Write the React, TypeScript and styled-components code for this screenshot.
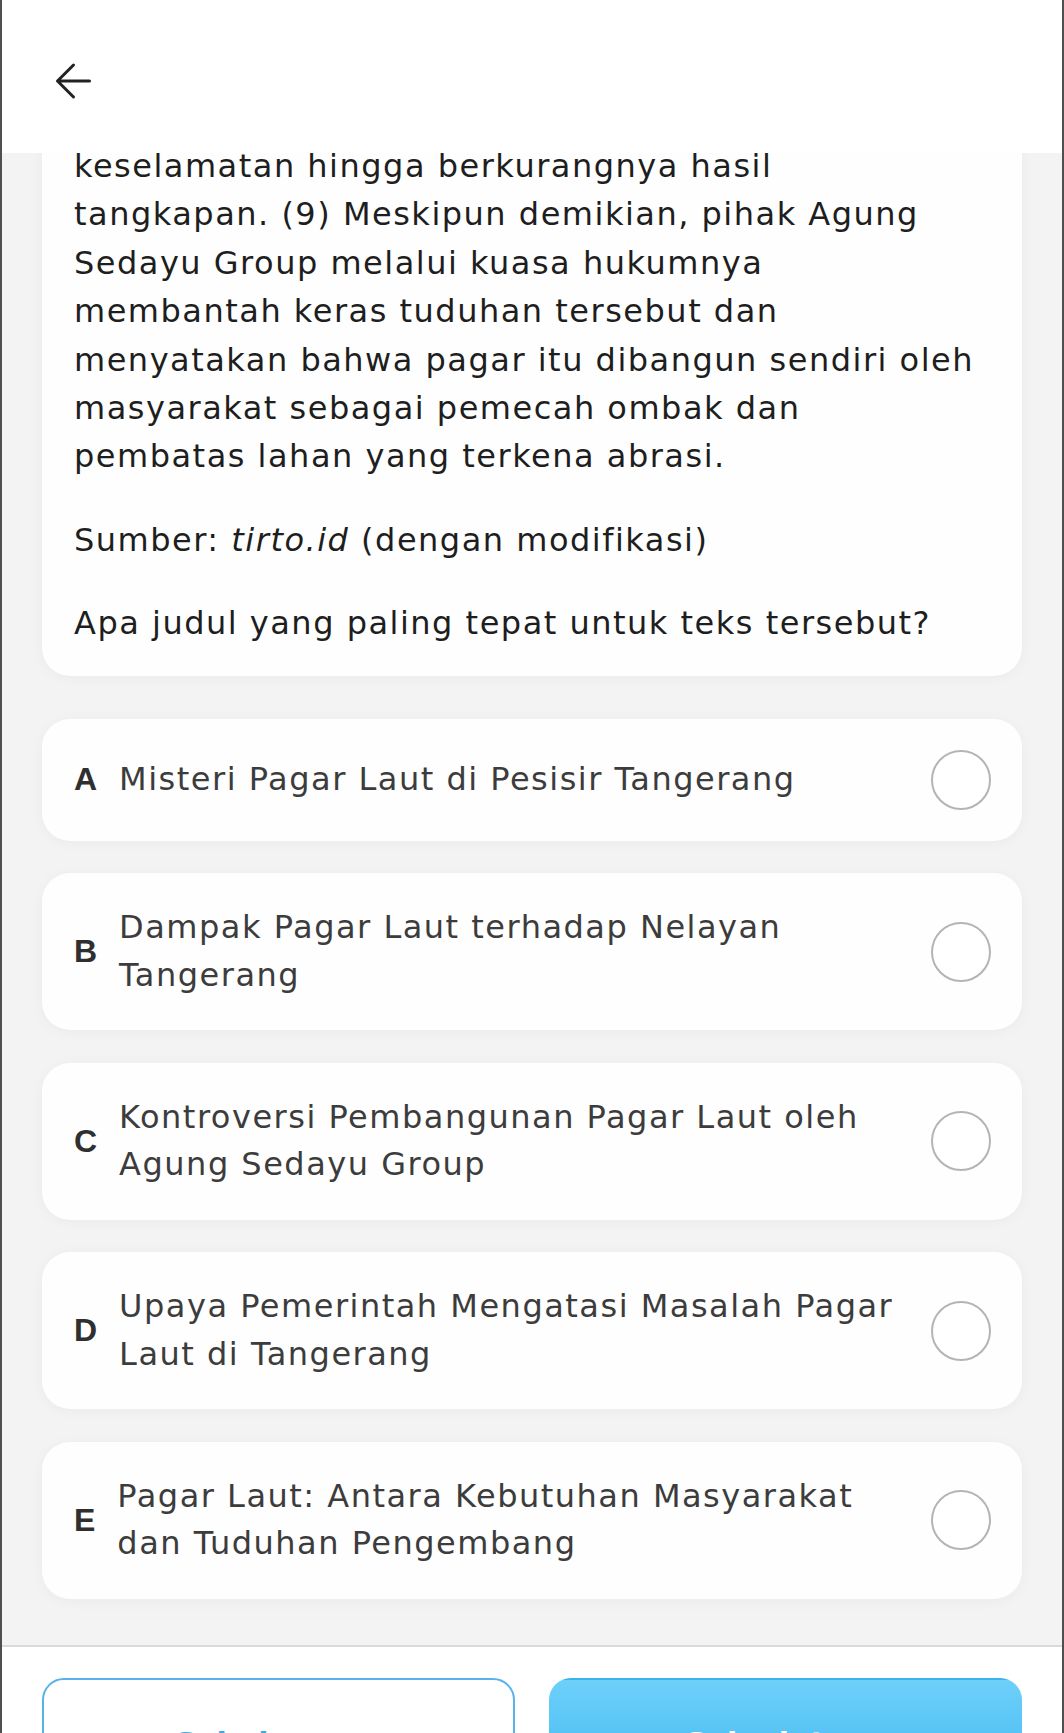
import React from "react";
import styled, { createGlobalStyle } from "styled-components";

const GlobalStyle = createGlobalStyle`
  html, body {
    margin: 0;
    padding: 0;
    background: #ffffff;
  }
  * {
    box-sizing: border-box;
  }
`;

const passageLines = [
  "keselamatan hingga berkurangnya hasil",
  "tangkapan. (9) Meskipun demikian, pihak Agung",
  "Sedayu Group melalui kuasa hukumnya",
  "membantah keras tuduhan tersebut dan",
  "menyatakan bahwa pagar itu dibangun sendiri oleh",
  "masyarakat sebagai pemecah ombak dan",
  "pembatas lahan yang terkena abrasi.",
];

const options = [
  { key: "A", lines: ["Misteri Pagar Laut di Pesisir Tangerang"] },
  { key: "B", lines: ["Dampak Pagar Laut terhadap Nelayan", "Tangerang"] },
  { key: "C", lines: ["Kontroversi Pembangunan Pagar Laut oleh", "Agung Sedayu Group"] },
  { key: "D", lines: ["Upaya Pemerintah Mengatasi Masalah Pagar", "Laut di Tangerang"] },
  { key: "E", lines: ["Pagar Laut: Antara Kebutuhan Masyarakat", "dan Tuduhan Pengembang"] },
];

const App = () => {
  return (
    <>
      <GlobalStyle />
      <Frame>
        <Header>
          <BackButton aria-label="Kembali">
            <svg width="38" height="38" viewBox="0 0 38 38" fill="none">
              <path
                d="M3.5 19H35.5M19.5 3L3.5 19L19.5 35"
                stroke="#222222"
                strokeWidth="3"
                strokeLinecap="round"
                strokeLinejoin="round"
              />
            </svg>
          </BackButton>
        </Header>

        <ScrollArea>
          <PassageCard>
            <Paragraph>
              {passageLines.map((line) => (
                <Line key={line}>{line}</Line>
              ))}
            </Paragraph>
            <Paragraph>
              <Line>
                Sumber: <em>tirto.id</em> (dengan modifikasi)
              </Line>
            </Paragraph>
            <Paragraph>
              <Line>Apa judul yang paling tepat untuk teks tersebut?</Line>
            </Paragraph>
          </PassageCard>

          <OptionList>
            {options.map((opt) => (
              <OptionCard key={opt.key}>
                <OptionKey>{opt.key}</OptionKey>
                <OptionText>
                  {opt.lines.map((line) => (
                    <Line key={line}>{line}</Line>
                  ))}
                </OptionText>
                <Radio />
              </OptionCard>
            ))}
          </OptionList>
        </ScrollArea>

        <Footer>
          <NavButton>Sebelumnya</NavButton>
          <NavButton $primary>Selanjutnya</NavButton>
        </Footer>
      </Frame>
    </>
  );
};

export default App;

const Frame = styled.div`
  height: 1733px;
  display: flex;
  flex-direction: column;
  overflow: hidden;
  border-left: 2px solid #4f4f4f;
  border-right: 2px solid #4f4f4f;
  font-family: "DejaVu Sans", "Open Sans", sans-serif;
`;

const Header = styled.div`
  height: 153px;
  flex-shrink: 0;
  background: #ffffff;
  padding: 62px 0 0 52px;
`;

const BackButton = styled.button`
  border: 0;
  padding: 0;
  background: transparent;
  display: flex;
  cursor: pointer;
`;

const ScrollArea = styled.div`
  flex: 1;
  overflow: hidden;
  background: #f3f3f3;
  padding: 0 40px;
`;

const PassageCard = styled.div`
  margin-top: -40px;
  background: #fefefe;
  border-radius: 28px;
  padding: 29px 32px 28px;
  display: flex;
  flex-direction: column;
  gap: 35px;
  box-shadow: 0 2px 14px rgba(0, 0, 0, 0.04);
`;

const Paragraph = styled.div`
  font-size: 32px;
  line-height: 48.4px;
  letter-spacing: 1.5px;
  color: #1e1e1e;

  em {
    font-style: italic;
  }
`;

const Line = styled.span`
  display: block;
  white-space: nowrap;
`;

const OptionList = styled.div`
  margin-top: 43px;
  display: flex;
  flex-direction: column;
  gap: 32.5px;
`;

const OptionCard = styled.div`
  display: flex;
  align-items: center;
  background: #fefefe;
  border-radius: 28px;
  padding: 31px 31px 31px 32px;
  box-shadow: 0 2px 14px rgba(0, 0, 0, 0.04);
`;

const OptionKey = styled.div`
  font-family: "Liberation Sans", Arial, sans-serif;
  font-weight: 700;
  font-size: 32px;
  color: #2f2f2f;
  margin-right: 22px;
`;

const OptionText = styled.div`
  flex: 1;
  font-size: 32px;
  line-height: 47.5px;
  letter-spacing: 1.5px;
  color: #3c3c3c;
`;

const Radio = styled.div`
  width: 60px;
  height: 60px;
  flex-shrink: 0;
  border: 2px solid #b4b4b4;
  border-radius: 50%;
  background: #ffffff;
`;

const Footer = styled.div`
  height: 88px;
  flex-shrink: 0;
  border-top: 2px solid #dadada;
  background: #ffffff;
  padding: 31px 40px 0 40px;
  display: grid;
  grid-template-columns: 1fr 1fr;
  gap: 34px;
  align-items: start;
`;

const NavButton = styled.button<{ $primary?: boolean }>`
  height: 130px;
  border-radius: 22px;
  font-family: "DejaVu Sans", sans-serif;
  font-size: 30px;
  font-weight: 600;
  cursor: pointer;
  border: 2px solid ${(p) => (p.$primary ? "transparent" : "#5ab2ea")};
  background: ${(p) =>
    p.$primary
      ? "linear-gradient(180deg, #6dd0fb 0%, #3ab3ec 100%)"
      : "#ffffff"};
  color: ${(p) => (p.$primary ? "#ffffff" : "#3ea8e5")};
`;
